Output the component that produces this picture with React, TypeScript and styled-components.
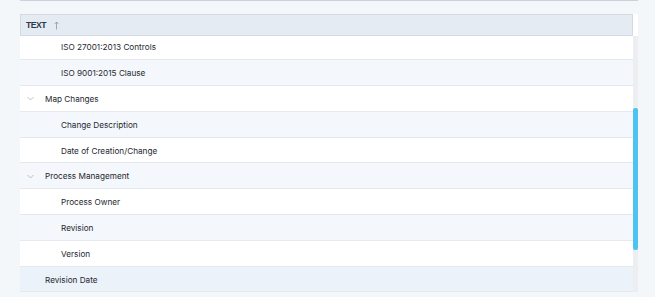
import React from "react";
import styled, { createGlobalStyle } from "styled-components";

const GlobalStyle = createGlobalStyle`
  html, body { margin: 0; padding: 0; background: #f4f7fa; }
  body { font-family: Inter, "Liberation Sans", Arial, sans-serif; }
`;

const Page = styled.div`
  padding: 0 17px 0 20px;
  height: 297px;
  box-sizing: border-box;
  overflow: hidden;
`;

const TopRule = styled.div`
  height: 1px;
  background: #cbd2da;
  margin-bottom: 13px;
`;

const Table = styled.div`
  display: flex;
  background: #ffffff;
`;

const Main = styled.div`
  flex: 1;
  min-width: 0;
`;

const Header = styled.div`
  height: 22px;
  box-sizing: border-box;
  background: #e4ebf3;
  border: 1px solid #d3dae3;
  display: flex;
  align-items: center;
  padding-left: 5px;
  gap: 8px;
`;

const HeaderLabel = styled.span`
  font-family: "Liberation Sans", Arial, sans-serif;
  font-weight: 700;
  font-size: 8.6px;
  letter-spacing: -0.5px;
  color: #2c3a4e;
`;

const SortIcon = styled.svg`
  width: 5px;
  height: 9px;
  margin-top: 1px;
`;

const Body = styled.div`
  height: 256px;
  overflow: hidden;
`;

const Rows = styled.div`
  margin-top: -1.5px;
`;

const Row = styled.div<{ $bg: string }>`
  height: 25.8px;
  box-sizing: border-box;
  border-bottom: 1px solid #e5e8ec;
  background: ${(p) => p.$bg};
  display: flex;
  align-items: center;
  padding-top: 1px;
`;

const Toggle = styled.span`
  width: 25px;
  display: flex;
  justify-content: flex-start;
  padding-left: 7px;
  box-sizing: border-box;
`;

const Indent = styled.span<{ $w: number }>`
  width: ${(p) => p.$w}px;
  flex: none;
`;

const Label = styled.span`
  font-size: 8.2px;
  color: #25292f;
`;

const Track = styled.div`
  width: 5px;
  margin-top: 22px;
  height: 256px;
  background: #eceef1;
  padding-top: 72px;
  box-sizing: border-box;
`;

const Thumb = styled.div`
  height: 142px;
  background: #4ec3f1;
  border-radius: 2px;
`;

const Chevron = () => (
  <svg width="7" height="5" viewBox="0 0 7 5">
    <path d="M0.5 1 L3.5 4 L6.5 1" fill="none" stroke="#b3bac3" strokeWidth="0.9" />
  </svg>
);

type Item = { text: string; level: 1 | 2; group?: boolean };

const items: Item[] = [
  { text: "ISO 27001:2013 Controls", level: 2 },
  { text: "ISO 9001:2015 Clause", level: 2 },
  { text: "Map Changes", level: 1, group: true },
  { text: "Change Description", level: 2 },
  { text: "Date of Creation/Change", level: 2 },
  { text: "Process Management", level: 1, group: true },
  { text: "Process Owner", level: 2 },
  { text: "Revision", level: 2 },
  { text: "Version", level: 2 },
  { text: "Revision Date", level: 1 },
];

export default function App() {
  return (
    <>
      <GlobalStyle />
      <Page>
        <TopRule />
        <Table>
          <Main>
            <Header>
              <HeaderLabel>TEXT</HeaderLabel>
              <SortIcon viewBox="0 0 5 9">
                <path d="M2.5 8.5 V1 M0.5 3 L2.5 1 L4.5 3" fill="none" stroke="#8d97a5" strokeWidth="0.8" />
              </SortIcon>
            </Header>
            <Body>
              <Rows>
                {items.map((it, i) => (
                  <Row
                    key={it.text}
                    $bg={i === items.length - 1 ? "#ecf2fa" : i % 2 === 1 ? "#f4f7fb" : "#ffffff"}
                  >
                    {it.group ? (
                      <Toggle>
                        <Chevron />
                      </Toggle>
                    ) : (
                      <Indent $w={it.level === 2 ? 41 : 25} />
                    )}
                    <Label>{it.text}</Label>
                  </Row>
                ))}
              </Rows>
            </Body>
          </Main>
          <Track>
            <Thumb />
          </Track>
        </Table>
      </Page>
    </>
  );
}
